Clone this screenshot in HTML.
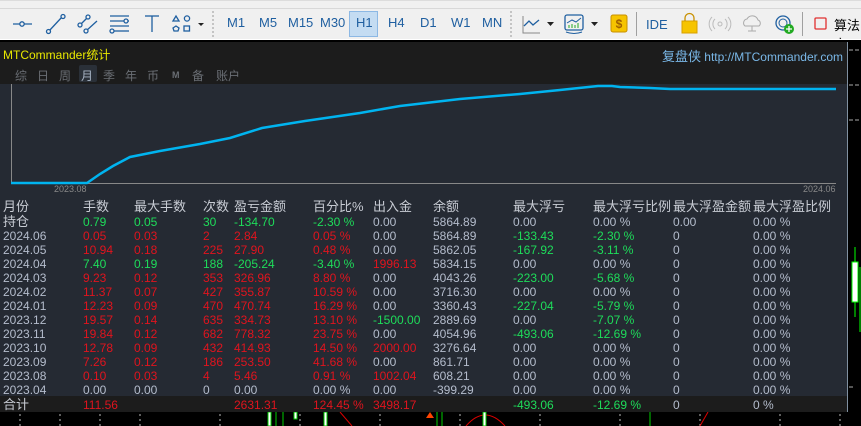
<!DOCTYPE html>
<html><head><meta charset="utf-8"><style>
*{margin:0;padding:0;box-sizing:border-box}
body{width:861px;height:426px;overflow:hidden;background:#000;font-family:"Liberation Sans","Noto Sans CJK SC",sans-serif;position:relative}
.tb{position:absolute;left:0;top:0;width:861px;height:39px;background:#f0f0f0;border-top:1px solid #dcdcdc}
.menu{position:absolute;left:0;top:0;width:861px;height:8px;background:#f0f0f0;border-bottom:1px solid #d8d8d8;overflow:hidden}
.tf{position:absolute;top:14px;font-size:13px;color:#1f5fa0}
.dots{position:absolute;top:10px;width:2px;height:26px;border-left:2px dotted #c4c4c4}
.panel{position:absolute;left:0;top:42px;width:848px;height:370px;background:#252a33;border-right:1px solid #8090a0}
.hdr{position:absolute;left:0;top:0;width:847px;height:42px;background:#1c1c1c}
.tab{position:absolute;top:25px;font-size:12px;color:#6a6e74}
.r{position:absolute;left:0;height:14px;font-size:12px;line-height:14px;white-space:nowrap;width:847px}
.r span{position:absolute;top:0}
.g{color:#b4bccc}.rd{color:#e0141e}.gr{color:#1edc5a}.w{color:#c8ccd4}
.c0{left:3px}.c1{left:83px}.c2{left:134px}.c3{left:203px}.c4{left:234px}.c5{left:313px}.c6{left:373px}.c7{left:433px}.c8{left:513px}.c9{left:593px}.c10{left:673px}.c11{left:753px}
</style></head><body>
<div class="tb">
<div class="menu"></div>
<svg style="position:absolute;left:0;top:8px" width="215" height="32" viewBox="0 8 215 32" fill="none" stroke="#1f5fa0" stroke-width="1.3">
<line x1="13" y1="23" x2="32" y2="23"/><circle cx="22" cy="23" r="2.2" fill="#f0f0f0"/>
<line x1="49" y1="30" x2="62" y2="16"/><circle cx="48.5" cy="30.5" r="2" fill="#f0f0f0"/><circle cx="63" cy="15.5" r="2" fill="#f0f0f0"/>
<line x1="79" y1="25" x2="88" y2="16"/><line x1="86" y1="30" x2="97" y2="20"/><circle cx="80" cy="24" r="2" fill="#f0f0f0"/><circle cx="88" cy="16" r="2" fill="#f0f0f0"/><circle cx="86" cy="30" r="2" fill="#f0f0f0"/>
<line x1="110" y1="15" x2="129" y2="15"/><line x1="110" y1="20" x2="129" y2="20"/><line x1="110" y1="25" x2="129" y2="25"/><line x1="114" y1="30" x2="129" y2="30"/><circle cx="112" cy="30" r="2" fill="#f0f0f0"/><circle cx="126" cy="20" r="2" fill="#f0f0f0"/>
<line x1="145" y1="15" x2="159" y2="15"/><line x1="152" y1="15" x2="152" y2="31"/>
<path d="M173 20 L176 15 L179 20 Z"/><circle cx="187" cy="17.5" r="2.6"/><path d="M173 27 L176 25 L179 27 L178 30 L174 30 Z"/><rect x="184" y="25" width="5.5" height="5"/>
<path d="M198 22 L204 22 L201 25 Z" fill="#222" stroke="none"/>
</svg>
<div class="dots" style="left:212px"></div>
<div style="position:absolute;left:349px;top:10px;width:29px;height:26px;background:#c4dcf2;border:1px solid #8cb8e4"></div>
<span class="tf" style="left:227px">M1</span><span class="tf" style="left:259px">M5</span><span class="tf" style="left:288px">M15</span><span class="tf" style="left:320px">M30</span><span class="tf" style="left:356px">H1</span><span class="tf" style="left:388px">H4</span><span class="tf" style="left:420px">D1</span><span class="tf" style="left:451px">W1</span><span class="tf" style="left:482px">MN</span>
<div class="dots" style="left:510px"></div>
<svg style="position:absolute;left:515px;top:8px" width="346" height="32" viewBox="515 8 346 32" fill="none">
<path d="M523 15 L523 32 L540 32" stroke="#888" stroke-width="1"/><path d="M524 25 L529 20 L533 24 L539 19" stroke="#1f5fa0" stroke-width="1.3"/>
<path d="M547 21 L554 21 L550.5 25 Z" fill="#222"/>
<rect x="565" y="14" width="18" height="15" rx="2" stroke="#1f5fa0" stroke-width="1.3"/><path d="M567 22 L572 19 L576 21 L581 17" stroke="#1f5fa0"/><path d="M569 27v-3M572 27v-4M575 27v-3M578 27v-5" stroke="#2a2"/><path d="M566 31 Q574 34 582 31" stroke="#1f5fa0"/>
<path d="M591 21 L598 21 L594.5 25 Z" fill="#222"/>
<rect x="611" y="14" width="16" height="17" rx="2" fill="#f6c400" stroke="#c89000"/>
<text x="619" y="27" font-size="12" font-weight="bold" text-anchor="middle" fill="#a06000" stroke="none" font-family="Liberation Sans">$</text>
<line x1="636.5" y1="11" x2="636.5" y2="35" stroke="#a0a0a0"/>
<text x="646" y="28" font-size="13" fill="#1f5fa0" font-family="Liberation Sans">IDE</text>
<path d="M682 20 L697 20 L697 32 L682 32 Z" fill="#f6c400" stroke="#d8a000"/><path d="M685 20 v-3 a4.5 4.5 0 0 1 9 0 v3" stroke="#c89000" stroke-width="1.3"/>
<circle cx="720" cy="23" r="2" stroke="#bbb"/><path d="M715 18 a7 7 0 0 0 0 10M725 18 a7 7 0 0 1 0 10M712 16 a10 10 0 0 0 0 14M728 16 a10 10 0 0 1 0 14" stroke="#bbb"/>
<path d="M745 25 a4 4 0 0 1 2-7 a6 6 0 0 1 11 1 a3.5 3.5 0 0 1 1 6 Z M752 25 v5 M748 30 h8" stroke="#aaa"/>
<circle cx="783" cy="22" r="7" stroke="#1f5fa0" stroke-width="1.3"/><circle cx="783" cy="22" r="4" stroke="#1f5fa0"/><circle cx="789" cy="28" r="5" fill="#2a2"/><path d="M786 28h6M789 25v6" stroke="#fff" stroke-width="1.3"/>
<line x1="802.5" y1="11" x2="802.5" y2="35" stroke="#a0a0a0"/>
<rect x="815" y="17" width="11" height="11" rx="1" stroke="#e03030" stroke-width="1.3"/>
</svg>
<span style="position:absolute;left:834px;top:14px;font-size:13px;color:#000">算法交</span>
</div>
<div style="position:absolute;left:0;top:39px;width:861px;height:3px;background:#000;border-top:1px solid #fff"></div>
<div class="panel">
<div class="hdr">
<span style="position:absolute;left:3px;top:4px;font-size:12px;color:#e8e800">MTCommander统计</span>
<span style="position:absolute;right:4px;top:4px;font-size:12px;color:#7ab8e8"><span style="font-size:13px">复盘侠</span> http://MTCommander.com</span>
<div style="position:absolute;left:79px;top:23px;width:18px;height:17px;background:#2a3038;border-radius:2px"></div>
<span class="tab" style="left:15px">综</span><span class="tab" style="left:37px">日</span><span class="tab" style="left:59px">周</span><span class="tab" style="left:81px;color:#a8b4c4">月</span><span class="tab" style="left:103px">季</span><span class="tab" style="left:125px">年</span><span class="tab" style="left:147px">币</span><span class="tab" style="left:172px;font-size:9px;font-weight:bold;top:28px">M</span><span class="tab" style="left:192px">备</span><span class="tab" style="left:216px">账户</span>
</div>
<svg style="position:absolute;left:0;top:42px" width="847" height="108" viewBox="0 84 847 108">
<line x1="11.5" y1="84" x2="11.5" y2="183" stroke="#888"/>
<line x1="11" y1="183.5" x2="836" y2="183.5" stroke="#888"/>
<polyline points="11,183 87,183 100,174 113,166 130,157 160,151 200,144 230,138 262,128 305,121 360,113 400,106 460,99 520,94 560,90 598,86 612,86 620,87 650,88 670,89 836,89" fill="none" stroke="#00b4f0" stroke-width="2.5"/>
<text x="54" y="192" font-size="9" fill="#888" font-family="Liberation Sans">2023.08</text>
<text x="803" y="192" font-size="9" fill="#888" font-family="Liberation Sans">2024.06</text>
</svg>
<div style="position:absolute;left:0;top:354px;width:847px;height:16px;background:#1c1c1c"></div>
</div>
<div style="position:absolute;left:0;top:200px">
<div class="r w" style="top:0;font-size:13px"><span class="c0">月份</span><span class="c1">手数</span><span class="c2">最大手数</span><span class="c3">次数</span><span class="c4">盈亏金额</span><span class="c5">百分比%</span><span class="c6">出入金</span><span class="c7">余额</span><span class="c8">最大浮亏</span><span class="c9">最大浮亏比例</span><span class="c10">最大浮盈金额</span><span class="c11">最大浮盈比例</span></div>
<div class="r" style="top:15px"><span class="c0 w" style="font-size:13px">持仓</span><span class="c1 gr">0.79</span><span class="c2 gr">0.05</span><span class="c3 gr">30</span><span class="c4 gr">-134.70</span><span class="c5 gr">-2.30 %</span><span class="c6 g">0.00</span><span class="c7 g">5864.89</span><span class="c8 g">0.00</span><span class="c9 g">0.00 %</span><span class="c10 g">0.00</span><span class="c11 g">0.00 %</span></div>
<div class="r" style="top:29px"><span class="c0 g">2024.06</span><span class="c1 rd">0.05</span><span class="c2 rd">0.03</span><span class="c3 rd">2</span><span class="c4 rd">2.84</span><span class="c5 rd">0.05 %</span><span class="c6 g">0.00</span><span class="c7 g">5864.89</span><span class="c8 gr">-133.43</span><span class="c9 gr">-2.30 %</span><span class="c10 g">0</span><span class="c11 g">0.00 %</span></div>
<div class="r" style="top:43px"><span class="c0 g">2024.05</span><span class="c1 rd">10.94</span><span class="c2 rd">0.18</span><span class="c3 rd">225</span><span class="c4 rd">27.90</span><span class="c5 rd">0.48 %</span><span class="c6 g">0.00</span><span class="c7 g">5862.05</span><span class="c8 gr">-167.92</span><span class="c9 gr">-3.11 %</span><span class="c10 g">0</span><span class="c11 g">0.00 %</span></div>
<div class="r" style="top:57px"><span class="c0 g">2024.04</span><span class="c1 gr">7.40</span><span class="c2 gr">0.19</span><span class="c3 gr">188</span><span class="c4 gr">-205.24</span><span class="c5 gr">-3.40 %</span><span class="c6 rd">1996.13</span><span class="c7 g">5834.15</span><span class="c8 g">0.00</span><span class="c9 g">0.00 %</span><span class="c10 g">0</span><span class="c11 g">0.00 %</span></div>
<div class="r" style="top:71px"><span class="c0 g">2024.03</span><span class="c1 rd">9.23</span><span class="c2 rd">0.12</span><span class="c3 rd">353</span><span class="c4 rd">326.96</span><span class="c5 rd">8.80 %</span><span class="c6 g">0.00</span><span class="c7 g">4043.26</span><span class="c8 gr">-223.00</span><span class="c9 gr">-5.68 %</span><span class="c10 g">0</span><span class="c11 g">0.00 %</span></div>
<div class="r" style="top:85px"><span class="c0 g">2024.02</span><span class="c1 rd">11.37</span><span class="c2 rd">0.07</span><span class="c3 rd">427</span><span class="c4 rd">355.87</span><span class="c5 rd">10.59 %</span><span class="c6 g">0.00</span><span class="c7 g">3716.30</span><span class="c8 g">0.00</span><span class="c9 g">0.00 %</span><span class="c10 g">0</span><span class="c11 g">0.00 %</span></div>
<div class="r" style="top:99px"><span class="c0 g">2024.01</span><span class="c1 rd">12.23</span><span class="c2 rd">0.09</span><span class="c3 rd">470</span><span class="c4 rd">470.74</span><span class="c5 rd">16.29 %</span><span class="c6 g">0.00</span><span class="c7 g">3360.43</span><span class="c8 gr">-227.04</span><span class="c9 gr">-5.79 %</span><span class="c10 g">0</span><span class="c11 g">0.00 %</span></div>
<div class="r" style="top:113px"><span class="c0 g">2023.12</span><span class="c1 rd">19.57</span><span class="c2 rd">0.14</span><span class="c3 rd">635</span><span class="c4 rd">334.73</span><span class="c5 rd">13.10 %</span><span class="c6 gr">-1500.00</span><span class="c7 g">2889.69</span><span class="c8 g">0.00</span><span class="c9 gr">-7.07 %</span><span class="c10 g">0</span><span class="c11 g">0.00 %</span></div>
<div class="r" style="top:127px"><span class="c0 g">2023.11</span><span class="c1 rd">19.84</span><span class="c2 rd">0.12</span><span class="c3 rd">682</span><span class="c4 rd">778.32</span><span class="c5 rd">23.75 %</span><span class="c6 g">0.00</span><span class="c7 g">4054.96</span><span class="c8 gr">-493.06</span><span class="c9 gr">-12.69 %</span><span class="c10 g">0</span><span class="c11 g">0.00 %</span></div>
<div class="r" style="top:141px"><span class="c0 g">2023.10</span><span class="c1 rd">12.78</span><span class="c2 rd">0.09</span><span class="c3 rd">432</span><span class="c4 rd">414.93</span><span class="c5 rd">14.50 %</span><span class="c6 rd">2000.00</span><span class="c7 g">3276.64</span><span class="c8 g">0.00</span><span class="c9 g">0.00 %</span><span class="c10 g">0</span><span class="c11 g">0.00 %</span></div>
<div class="r" style="top:155px"><span class="c0 g">2023.09</span><span class="c1 rd">7.26</span><span class="c2 rd">0.12</span><span class="c3 rd">186</span><span class="c4 rd">253.50</span><span class="c5 rd">41.68 %</span><span class="c6 g">0.00</span><span class="c7 g">861.71</span><span class="c8 g">0.00</span><span class="c9 g">0.00 %</span><span class="c10 g">0</span><span class="c11 g">0.00 %</span></div>
<div class="r" style="top:169px"><span class="c0 g">2023.08</span><span class="c1 rd">0.10</span><span class="c2 rd">0.03</span><span class="c3 rd">4</span><span class="c4 rd">5.46</span><span class="c5 rd">0.91 %</span><span class="c6 rd">1002.04</span><span class="c7 g">608.21</span><span class="c8 g">0.00</span><span class="c9 g">0.00 %</span><span class="c10 g">0</span><span class="c11 g">0.00 %</span></div>
<div class="r" style="top:183px"><span class="c0 g">2023.04</span><span class="c1 g">0.00</span><span class="c2 g">0.00</span><span class="c3 g">0</span><span class="c4 g">0.00</span><span class="c5 g">0.00 %</span><span class="c6 g">0.00</span><span class="c7 g">-399.29</span><span class="c8 g">0.00</span><span class="c9 g">0.00 %</span><span class="c10 g">0</span><span class="c11 g">0.00 %</span></div>
<div class="r" style="top:198px"><span class="c0 w" style="font-size:13px">合计</span><span class="c1 rd">111.56</span><span class="c4 rd">2631.31</span><span class="c5 rd">124.45 %</span><span class="c6 rd">3498.17</span><span class="c8 gr">-493.06</span><span class="c9 gr">-12.69 %</span><span class="c10 g">0</span><span class="c11 g">0 %</span></div>
</div>
<svg style="position:absolute;left:0;top:412px" width="861" height="14">
<g stroke="#bbb" stroke-dasharray="2,3"><line x1="20" y1="2" x2="20" y2="14"/><line x1="60" y1="2" x2="60" y2="14"/><line x1="100" y1="2" x2="100" y2="14"/><line x1="140" y1="2" x2="140" y2="14"/><line x1="220" y1="2" x2="220" y2="14"/><line x1="300" y1="2" x2="300" y2="14"/><line x1="380" y1="2" x2="380" y2="14"/><line x1="460" y1="2" x2="460" y2="14"/><line x1="540" y1="2" x2="540" y2="14"/><line x1="620" y1="2" x2="620" y2="14"/><line x1="700" y1="2" x2="700" y2="14"/><line x1="780" y1="2" x2="780" y2="14"/><line x1="840" y1="2" x2="840" y2="14"/></g>
<rect x="268" y="0" width="3" height="14" fill="#fff" stroke="#0c0"/><line x1="276" y1="0" x2="276" y2="14" stroke="#0c0"/><line x1="283" y1="0" x2="283" y2="14" stroke="#0c0"/><rect x="294" y="0" width="3" height="7" fill="#fff" stroke="#0c0"/><rect x="324" y="0" width="3" height="14" fill="#fff" stroke="#0c0"/>
<path d="M340 0 L352 14" stroke="#d00"/><path d="M426 6 L430 0 L434 6 Z" fill="#f40"/><line x1="437" y1="0" x2="437" y2="14" stroke="#0c0"/><line x1="442" y1="0" x2="442" y2="14" stroke="#0c0"/>
<path d="M466 14 Q485 -8 505 14" stroke="#d00" fill="none"/><rect x="483" y="0" width="3" height="14" fill="#fff" stroke="#0c0"/><line x1="650" y1="0" x2="650" y2="14" stroke="#0c0"/><path d="M700 14 L708 0" stroke="#d00"/>
</svg>
<svg style="position:absolute;left:849px;top:42px" width="12" height="370">
<g stroke="#aaa"><line x1="0" y1="8" x2="4" y2="8"/><line x1="6" y1="8" x2="10" y2="8"/><line x1="0" y1="43" x2="4" y2="43"/><line x1="6" y1="43" x2="10" y2="43"/><line x1="0" y1="78" x2="4" y2="78"/><line x1="6" y1="78" x2="10" y2="78"/><line x1="0" y1="345" x2="4" y2="345"/></g>
<line x1="6" y1="205" x2="6" y2="275" stroke="#0f0"/><rect x="3" y="220" width="6" height="40" fill="#fff" stroke="#0f0"/><line x1="11" y1="225" x2="11" y2="290" stroke="#0f0"/>
</svg>
</body></html>
